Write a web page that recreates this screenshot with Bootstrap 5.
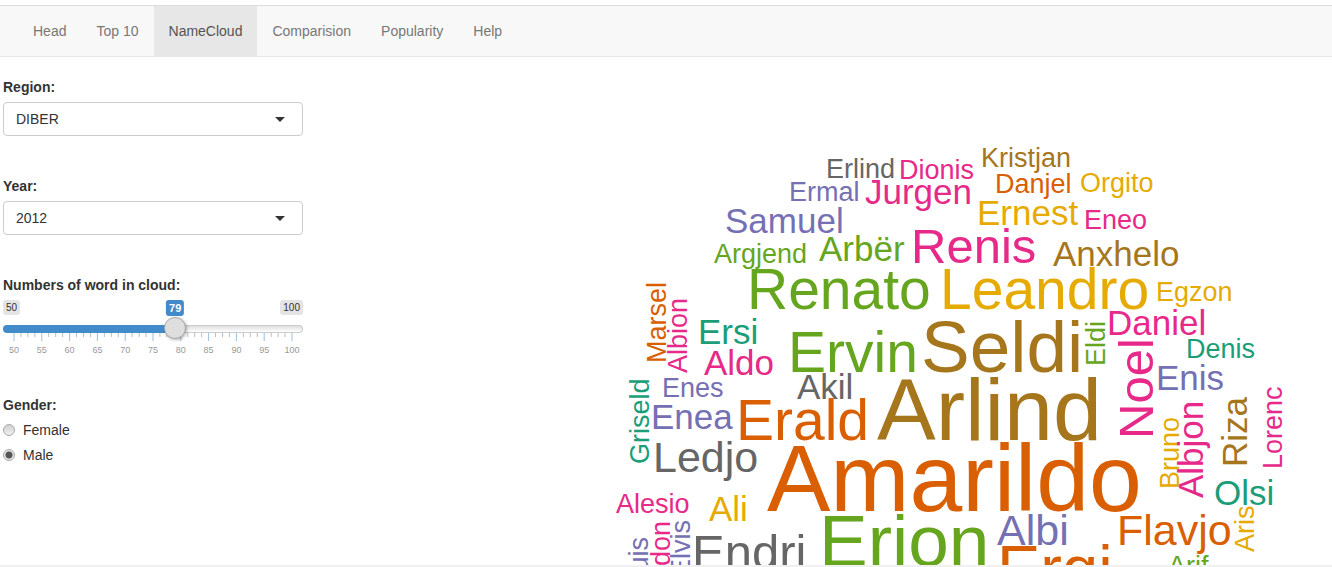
<!DOCTYPE html>
<html lang="en">
<head>
<meta charset="utf-8">
<meta name="viewport" content="width=device-width, initial-scale=1">
<title>NameCloud</title>
<link href="https://cdn.jsdelivr.net/npm/bootstrap@5.3.0/dist/css/bootstrap.min.css" rel="stylesheet">
<style>
  body { font-family: "Liberation Sans", Arial, sans-serif; font-size: 14px; line-height: 20px; color: #333; background: #fff; }
  .topbar { margin-top: 5px; padding: 0 18px; background: #f8f8f8; border-top: 1px solid #ddd; border-bottom: 1px solid #e7e7e7; }
  .topbar .nav-link { padding: 15px; color: #777; }
  .topbar .nav-link:hover { color: #333; }
  .topbar .nav-link.active { background: #e7e7e7; color: #555; }
  .page-main { padding: 20px 3px 0; gap: 30px; }
  .controls { flex: 0 0 300px; gap: 40px; }
  .title-label { display: block; font-size: 14px; line-height: 20px; font-weight: 700; margin: 0 0 5px; }
  .controls .form-select {
    height: 34px; padding: 6px 36px 6px 12px; font-size: 14px; line-height: 20px; color: #333;
    border: 1px solid #ccc; border-radius: 4px;
    background-image: url("data:image/svg+xml,%3Csvg xmlns='http://www.w3.org/2000/svg' viewBox='0 0 10 5'%3E%3Cpath d='M0 0h10L5 5z' fill='%23333'/%3E%3C/svg%3E");
    background-size: 10px 5px; background-position: right 17px center;
  }
  .slider-tags { height: 16px; }
  .tag-end { height: 15px; padding: 0 3px; font-size: 10px; line-height: 15px; background: #e4e4e4; border-radius: 3px; }
  .tag-value { top: 0; padding: 0 3px; font-size: 11px; line-height: 16px; font-weight: 700; color: #fff; background: #428bca; border-radius: 3px; transform: translateX(-50%); left: calc(11px + (100% - 22px) * var(--at)); }
  .word-range { display: block; width: 100%; height: 22px; margin: 2px 0 0; appearance: none; -webkit-appearance: none; background: transparent; position: relative; z-index: 1; }
  .word-range::-webkit-slider-runnable-track {
    height: 8px; border-radius: 8px; border: 1px solid transparent;
    background:
      linear-gradient(#428bca, #428bca) 0 0 / calc(11px + (100% - 22px) * var(--at)) 100% no-repeat border-box,
      linear-gradient(#dedede, #fff) padding-box,
      linear-gradient(#ccc, #ccc) border-box;
  }
  .word-range::-webkit-slider-thumb { -webkit-appearance: none; width: 22px; height: 22px; margin-top: -9px; border-radius: 50%; border: 1px solid #aaa; background: #dedede; box-shadow: 1px 1px 3px rgba(0,0,0,.3); }
  .ruler { padding: 0 11px; margin-top: -7px; }
  .ruler svg { display: block; width: 100%; height: 8px; overflow: visible; }
  .ruler-text { font-size: 9px; line-height: 10px; color: #999; padding-top: 4px; }
  .ruler-text span { width: 0; display: flex; justify-content: center; }
  .choice { gap: 8px; height: 20px; }
  .choice + .choice { margin-top: 5px; }
  .choice .form-check-input { width: 12px; height: 12px; margin: 0; border: 1px solid #aaa; background: linear-gradient(#d2d2d2, #eee); }
  .choice .form-check-input:checked { background: radial-gradient(circle, #555 0 3px, #e4e4e4 4px); }
  .cloud text { font-family: "Liberation Sans", Arial, sans-serif; font-kerning: none; }
  .sz1 { font-size: 27px; } .sz2 { font-size: 35px; } .sz3 { font-size: 43px; } .sz4 { font-size: 49px; }
  .sz5 { font-size: 57px; } .sz6 { font-size: 65px; } .sz7 { font-size: 73px; } .sz8 { font-size: 88px; } .sz9 { font-size: 95px; }
  .teal { fill: #1b9e77; } .rust { fill: #d95f02; } .violet { fill: #7570b3; } .rose { fill: #e7298a; }
  .leaf { fill: #66a61e; } .gold { fill: #e6ab02; } .wood { fill: #a6761d; } .ash { fill: #666; }
  .strip { height: 2px; background: #f0f0f0; }
</style>
</head>
<body class="vh-100 d-flex flex-column overflow-hidden">
<nav class="topbar">
  <ul class="nav">
    <li class="nav-item"><a class="nav-link" href="#head">Head</a></li>
    <li class="nav-item"><a class="nav-link" href="#top">Top 10</a></li>
    <li class="nav-item"><a class="nav-link active" aria-current="page" href="#cloud">NameCloud</a></li>
    <li class="nav-item"><a class="nav-link" href="#comparision">Comparision</a></li>
    <li class="nav-item"><a class="nav-link" href="#popularity">Popularity</a></li>
    <li class="nav-item"><a class="nav-link" href="#help">Help</a></li>
  </ul>
</nav>

<main class="page-main d-flex flex-grow-1 overflow-hidden align-items-start">
  <form class="controls d-flex flex-column">
    <div>
      <label class="title-label" for="region">Region:</label>
      <select class="form-select" id="region"><option>DIBER</option></select>
    </div>
    <div>
      <label class="title-label" for="year">Year:</label>
      <select class="form-select" id="year"><option>2012</option></select>
    </div>
    <div style="--at:.58">
      <label class="title-label" for="words">Numbers of word in cloud:</label>
      <div class="slider-tags position-relative d-flex justify-content-between align-items-start">
        <span class="tag-end">50</span>
        <output class="tag-value position-absolute" for="words">79</output>
        <span class="tag-end">100</span>
      </div>
      <input class="word-range" type="range" id="words" min="50" max="100" value="79">
      <div class="ruler">
        <svg viewBox="0 0 40 8" preserveAspectRatio="none" fill="none" aria-hidden="true">
          <path stroke="#bbb" vector-effect="non-scaling-stroke" d="M1 0v4M2 0v4M3 0v4M5 0v4M6 0v4M7 0v4M9 0v4M10 0v4M11 0v4M13 0v4M14 0v4M15 0v4M17 0v4M18 0v4M19 0v4M21 0v4M22 0v4M23 0v4M25 0v4M26 0v4M27 0v4M29 0v4M30 0v4M31 0v4M33 0v4M34 0v4M35 0v4M37 0v4M38 0v4M39 0v4"/>
          <path stroke="#99bfdf" vector-effect="non-scaling-stroke" d="M0 0v8M4 0v8M8 0v8M12 0v8M16 0v8M20 0v8M24 0v8M28 0v8M32 0v8M36 0v8M40 0v8"/>
        </svg>
        <div class="ruler-text d-flex justify-content-between">
          <span>50</span><span>55</span><span>60</span><span>65</span><span>70</span><span>75</span><span>80</span><span>85</span><span>90</span><span>95</span><span>100</span>
        </div>
      </div>
    </div>
    <fieldset>
      <legend class="title-label">Gender:</legend>
      <div class="d-flex align-items-center choice">
        <input class="form-check-input" type="radio" name="gender" id="female"><label for="female">Female</label>
      </div>
      <div class="d-flex align-items-center choice">
        <input class="form-check-input" type="radio" name="gender" id="male" checked><label for="male">Male</label>
      </div>
    </fieldset>
  </form>

  <div class="flex-grow-1">
    <svg class="cloud d-block w-100" viewBox="333 77 996 800" role="img" aria-label="Name cloud">
      <text class="sz1 ash" x="826" y="178">Erlind</text>
      <text class="sz1 rose" x="899" y="179">Dionis</text>
      <text class="sz1 wood" x="981" y="167">Kristjan</text>
      <text class="sz1 rust" x="995" y="193">Danjel</text>
      <text class="sz1 gold" x="1080" y="192">Orgito</text>
      <text class="sz1 violet" x="789" y="201">Ermal</text>
      <text class="sz2 rose" x="865" y="204">Jurgen</text>
      <text class="sz2 gold" x="977" y="225">Ernest</text>
      <text class="sz1 rose" x="1084" y="229">Eneo</text>
      <text class="sz2 violet" x="725" y="233">Samuel</text>
      <text class="sz1 leaf" x="714" y="263">Argjend</text>
      <text class="sz2 leaf" x="819" y="261">Arbër</text>
      <text class="sz4 rose" x="911" y="263">Renis</text>
      <text class="sz2 wood" x="1053" y="266">Anxhelo</text>
      <text class="sz5 leaf" x="747" y="309">Renato</text>
      <text class="sz5 gold" x="940" y="309">Leandro</text>
      <text class="sz1 gold" x="1156" y="301">Egzon</text>
      <text class="sz2 rose" x="1107" y="335">Daniel</text>
      <text class="sz1 teal" x="1186" y="358">Denis</text>
      <text class="sz2 violet" x="1156" y="390">Enis</text>
      <text class="sz2 teal" x="698" y="344">Ersi</text>
      <text class="sz2 rose" x="704" y="375">Aldo</text>
      <text class="sz5 leaf" x="788" y="372">Ervin</text>
      <text class="sz7 wood" x="921" y="372">Seldi</text>
      <text class="sz2 ash" x="797" y="399">Akil</text>
      <text class="sz8 wood" x="877" y="440">Arlind</text>
      <text class="sz1 violet" x="662" y="397">Enes</text>
      <text class="sz2 violet" x="651" y="429">Enea</text>
      <text class="sz5 rust" x="736" y="440">Erald</text>
      <text class="sz3 ash" x="653" y="472">Ledjo</text>
      <text class="sz9 rust" x="767" y="511">Amarildo</text>
      <text class="sz1 rose" x="616" y="513">Alesio</text>
      <text class="sz2 gold" x="709" y="521">Ali</text>
      <text class="sz4 ash" x="692" y="569">Endri</text>
      <text class="sz7 leaf" x="819" y="566">Erion</text>
      <text class="sz3 violet" x="997" y="545">Albi</text>
      <text class="sz6 rust" x="997" y="591">Ergi</text>
      <text class="sz3 rust" x="1117" y="545">Flavjo</text>
      <text class="sz2 teal" x="1214" y="505">Olsi</text>
      <text class="sz1 leaf" x="1168" y="575">Arif</text>
      <text class="sz1 rust" transform="translate(666 363) rotate(-90)">Marsel</text>
      <text class="sz1 rose" transform="translate(687 373) rotate(-90)">Albion</text>
      <text class="sz1 teal" transform="translate(649 464) rotate(-90)">Griseld</text>
      <text class="sz1 leaf" transform="translate(1105 366) rotate(-90)">Eldi</text>
      <text class="sz4 rose" transform="translate(1153 439) rotate(-90)">Noel</text>
      <text class="sz1 gold" transform="translate(1179 489) rotate(-90)">Bruno</text>
      <text class="sz2 rose" transform="translate(1203 498) rotate(-90)">Albjon</text>
      <text class="sz2 wood" transform="translate(1247 467) rotate(-90)">Riza</text>
      <text class="sz1 rose" transform="translate(1282 469) rotate(-90)">Lorenc</text>
      <text class="sz1 gold" transform="translate(1254 552) rotate(-90)">Aris</text>
      <text class="sz1 violet" text-anchor="end" transform="translate(648 537) rotate(-90)">Luis</text>
      <text class="sz1 rose" text-anchor="end" transform="translate(670 521) rotate(-90)">Ardon</text>
      <text class="sz1 violet" text-anchor="end" transform="translate(690 520) rotate(-90)">Elvis</text>
    </svg>
  </div>
</main>
<div class="strip flex-shrink-0"></div>
<script src="https://cdn.jsdelivr.net/npm/bootstrap@5.3.0/dist/js/bootstrap.bundle.min.js"></script>
</body>
</html>
